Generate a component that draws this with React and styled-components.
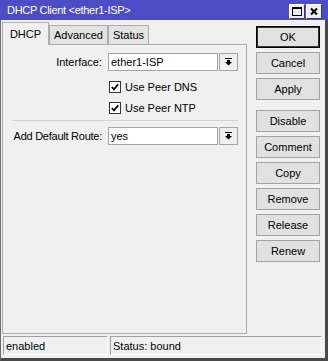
import React from 'react';
import styled, { createGlobalStyle } from 'styled-components';

const GlobalStyle = createGlobalStyle`
  html, body { margin: 0; padding: 0; background: #f0f0f0; }
  body {
    font-family: "Liberation Sans", Arial, sans-serif;
    font-size: 11px;
    color: #000;
  }
  * { box-sizing: border-box; }
`;

const Window = styled.div`
  width: 328px;
  height: 361px;
  display: flex;
  flex-direction: column;
  background: #f0f0f0;
`;

const TitleBar = styled.div`
  height: 20px;
  flex: none;
  display: flex;
  align-items: center;
  padding: 0 6px 0 7px;
  background: #4c4cc5;
  color: #fff;
`;

const Title = styled.span`
  flex: 1;
  font-size: 11px;
  letter-spacing: -0.3px;
  white-space: nowrap;
`;

const TitleButtons = styled.div`
  display: flex;
  gap: 1px;
  margin-top: 2px;
`;

const TitleButton = styled.div`
  width: 16px;
  height: 15px;
  display: flex;
  align-items: center;
  justify-content: center;
  background: #ececec;
  border: 1px solid;
  border-color: #ffffff #404040 #404040 #ffffff;
`;

const Frame = styled.div`
  flex: 1;
  display: flex;
  flex-direction: column;
  border-left: 1px solid #6b6b6b;
  border-right: 3px solid #4a4a4a;
  border-bottom: 3px solid #4a4a4a;
`;

const Main = styled.div`
  display: flex;
  padding-left: 1px;
`;

const LeftCol = styled.div`
  width: 245px;
  padding-top: 2px;
  display: flex;
  flex-direction: column;
`;

const TabRow = styled.div`
  height: 22px;
  display: flex;
  align-items: flex-end;
  position: relative;
  z-index: 1;
`;

const Tab = styled.div`
  width: ${p => p.$w}px;
  height: ${p => (p.$active ? 23 : 19)}px;
  margin-bottom: ${p => (p.$active ? -1 : 0)}px;
  display: flex;
  align-items: center;
  justify-content: center;
  background: ${p => (p.$active ? '#f0f0f0' : '#e3e3e3')};
  border: 1px solid #adadad;
  border-bottom: none;
  white-space: nowrap;
`;

const Panel = styled.div`
  height: 290px;
  border: 1px solid #adadad;
  background: #f0f0f0;
  padding: 8px 8px 0 9px;
  display: flex;
  flex-direction: column;
`;

const FieldRow = styled.div`
  display: flex;
  align-items: center;
  height: 18px;
  margin-top: ${p => p.$mt || 0}px;
`;

const Label = styled.div`
  width: 90px;
  margin-right: 6px;
  display: flex;
  justify-content: flex-end;
  white-space: nowrap;
  letter-spacing: ${p => (p.$tight ? '-0.25px' : '0')};
`;

const Input = styled.div`
  width: 110px;
  height: 18px;
  display: flex;
  align-items: center;
  padding-left: 2px;
  background: #fff;
  border: 1px solid #a5a5a5;
`;

const DropButton = styled.div`
  width: 19px;
  height: 18px;
  margin-left: 1px;
  display: flex;
  align-items: center;
  justify-content: center;
  background: #f0f0f0;
  border: 1px solid #a5a5a5;
`;

const CheckRow = styled.div`
  display: flex;
  align-items: center;
  height: 13px;
  margin-left: 97px;
  margin-top: ${p => p.$mt}px;
`;

const Box = styled.div`
  width: 12px;
  height: 12px;
  display: flex;
  align-items: center;
  justify-content: center;
  background: #fff;
  border: 1px solid #333;
  margin-right: 4px;
`;

const Separator = styled.div`
  height: 1px;
  margin-top: 6px;
  background: #d2d2d2;
`;

const RightCol = styled.div`
  margin-left: 9px;
  padding-top: 6px;
  display: flex;
  flex-direction: column;
  gap: 4px;
`;

const Button = styled.div`
  width: 64px;
  height: 22px;
  display: flex;
  align-items: center;
  justify-content: center;
  background: #e1e1e1;
  border: 1px solid ${p => (p.$default ? '#000' : '#a3a3a3')};
  box-shadow: ${p => (p.$default ? 'inset 0 0 0 1px #333' : 'none')};
  margin-top: ${p => (p.$gap ? 6 : 0)}px;
`;

const StatusBar = styled.div`
  height: 19px;
  margin-top: 2px;
  padding-left: 2px;
  display: flex;
  gap: 2px;
`;

const StatusCell = styled.div`
  width: ${p => p.$w}px;
  height: 19px;
  display: flex;
  align-items: center;
  padding-left: 2px;
  border: 1px solid;
  border-color: #a0a0a0 #ffffff #ffffff #a0a0a0;
`;

const MaxIcon = () => (
  <svg width="10" height="9" viewBox="0 0 10 9">
    <rect x="0.5" y="0.5" width="9" height="8" fill="none" stroke="#000" />
    <rect x="0" y="0" width="10" height="2" fill="#000" />
  </svg>
);

const CloseIcon = () => (
  <svg width="8" height="7" viewBox="0 0 8 7">
    <path d="M1 0.5 L7 6.5 M7 0.5 L1 6.5" stroke="#000" strokeWidth="2" />
  </svg>
);

const DropIcon = () => (
  <svg width="7" height="8" viewBox="0 0 7 8">
    <rect x="0" y="0" width="7" height="1" fill="#000" />
    <path d="M2 2 H5 V4 H7 L3.5 7.5 L0 4 H2 Z" fill="#000" />
  </svg>
);

const CheckIcon = () => (
  <svg width="8" height="8" viewBox="0 0 8 8">
    <path d="M0.8 4 L3 6.3 L7.2 1.2" fill="none" stroke="#000" strokeWidth="1.8" />
  </svg>
);

const tabs = [
  { name: 'DHCP', w: 47, active: true },
  { name: 'Advanced', w: 59 },
  { name: 'Status', w: 41 },
];

const buttons = [
  { name: 'OK', def: true },
  { name: 'Cancel' },
  { name: 'Apply' },
  { name: 'Disable', gap: true },
  { name: 'Comment' },
  { name: 'Copy' },
  { name: 'Remove' },
  { name: 'Release' },
  { name: 'Renew' },
];

export default function App() {
  return (
    <>
      <GlobalStyle />
      <Window>
        <TitleBar>
          <Title>DHCP Client &lt;ether1-ISP&gt;</Title>
          <TitleButtons>
            <TitleButton><MaxIcon /></TitleButton>
            <TitleButton><CloseIcon /></TitleButton>
          </TitleButtons>
        </TitleBar>
        <Frame>
          <Main>
            <LeftCol>
              <TabRow>
                {tabs.map(t => (
                  <Tab key={t.name} $w={t.w} $active={t.active}>{t.name}</Tab>
                ))}
              </TabRow>
              <Panel>
                <FieldRow>
                  <Label>Interface:</Label>
                  <Input>ether1-ISP</Input>
                  <DropButton><DropIcon /></DropButton>
                </FieldRow>
                <CheckRow $mt={9}>
                  <Box><CheckIcon /></Box>
                  Use Peer DNS
                </CheckRow>
                <CheckRow $mt={8}>
                  <Box><CheckIcon /></Box>
                  Use Peer NTP
                </CheckRow>
                <Separator />
                <FieldRow $mt={6}>
                  <Label $tight>Add Default Route:</Label>
                  <Input>yes</Input>
                  <DropButton><DropIcon /></DropButton>
                </FieldRow>
              </Panel>
            </LeftCol>
            <RightCol>
              {buttons.map(b => (
                <Button key={b.name} $default={b.def} $gap={b.gap}>{b.name}</Button>
              ))}
            </RightCol>
          </Main>
          <StatusBar>
            <StatusCell $w={105}>enabled</StatusCell>
            <StatusCell $w={212}>Status: bound</StatusCell>
          </StatusBar>
        </Frame>
      </Window>
    </>
  );
}
